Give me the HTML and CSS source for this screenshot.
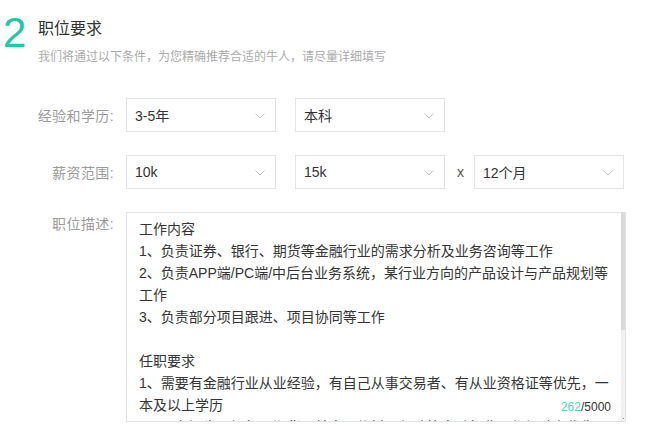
FILE: index.html
```html
<!DOCTYPE html>
<html lang="zh-CN">
<head>
<meta charset="utf-8">
<title>职位要求</title>
<link rel="stylesheet" href="styles.css">
</head>
<body>
<div class="page">
  <div class="step">
    <div class="num">2</div>
    <div class="head">
      <div class="title">职位要求</div>
      <div class="sub">我们将通过以下条件，为您精确推荐合适的牛人，请尽量详细填写</div>
    </div>
  </div>

  <div class="form">
    <div class="row">
      <div class="label">经验和学历:</div>
      <div class="sel"><span>3-5年</span><svg class="chev" width="10" height="6" viewBox="0 0 10 6"><path d="M0.5 0.5 L5 5 L9.5 0.5" fill="none" stroke="#c3c5cf" stroke-width="1"/></svg></div>
      <div class="sel gap"><span>本科</span><svg class="chev" width="10" height="6" viewBox="0 0 10 6"><path d="M0.5 0.5 L5 5 L9.5 0.5" fill="none" stroke="#c3c5cf" stroke-width="1"/></svg></div>
    </div>
    <div class="row">
      <div class="label">薪资范围:</div>
      <div class="sel"><span>10k</span><svg class="chev" width="10" height="6" viewBox="0 0 10 6"><path d="M0.5 0.5 L5 5 L9.5 0.5" fill="none" stroke="#c3c5cf" stroke-width="1"/></svg></div>
      <div class="sel gap"><span>15k</span><svg class="chev" width="10" height="6" viewBox="0 0 10 6"><path d="M0.5 0.5 L5 5 L9.5 0.5" fill="none" stroke="#c3c5cf" stroke-width="1"/></svg></div>
      <span class="times">x</span>
      <div class="sel"><span>12个月</span><svg class="chev" width="10" height="6" viewBox="0 0 10 6"><path d="M0.5 0.5 L5 5 L9.5 0.5" fill="none" stroke="#c3c5cf" stroke-width="1"/></svg></div>
    </div>
    <div class="row desc">
      <div class="label">职位描述:</div>
      <div class="ta">
        <div class="ta-text">
          <div class="ln">工作内容</div>
          <div class="ln">1、负责证券、银行、期货等金融行业的需求分析及业务咨询等工作</div>
          <div class="ln">2、负责APP端/PC端/中后台业务系统，某行业方向的产品设计与产品规划等</div>
          <div class="ln">工作</div>
          <div class="ln">3、负责部分项目跟进、项目协同等工作</div>
          <div class="ln">&nbsp;</div>
          <div class="ln">任职要求</div>
          <div class="ln">1、需要有金融行业从业经验，有自己从事交易者、有从业资格证等优先，一</div>
          <div class="ln">本及以上学历</div>
          <div class="ln">2、具有证券、银行、期货、基金、信托、保险等金融行业工作经验者优先</div>
        </div>
        <div class="count"><span class="cur">262</span>/5000</div>
        <div class="scroll"><div class="thumb"></div><div class="arrow"></div></div>
      </div>
    </div>
  </div>
</div>
</body>
</html>
```

FILE: styles.css
```css
html, body {
  margin: 0;
  padding: 0;
  background: #ffffff;
}

body {
  font-family: "Liberation Sans", "Noto Sans CJK SC", sans-serif;
  color: #333333;
}

.page {
  width: 650px;
  height: 433px;
  overflow: hidden;
}

.step {
  display: flex;
  align-items: flex-start;
}

.num {
  margin-top: 12px;
  margin-left: 3px;
  width: 35px;
  font-size: 42px;
  line-height: 42px;
  color: #21c7a7;
}

.head {
  margin-top: 18px;
}

.title {
  font-size: 16px;
  line-height: 22px;
  color: #333333;
}

.sub {
  margin-top: 8px;
  font-size: 12px;
  line-height: 18px;
  color: #ababab;
}

.form {
  margin-top: 32px;
  display: flex;
  flex-direction: column;
  gap: 23px;
}

.row {
  display: flex;
  align-items: center;
  height: 34px;
}

.label {
  box-sizing: border-box;
  width: 115px;
  margin-right: 11px;
  padding-right: 1px;
  text-align: right;
  font-size: 14px;
  letter-spacing: 0.4px;
  color: #9b9b9b;
  white-space: nowrap;
}

.sel {
  box-sizing: border-box;
  width: 150px;
  height: 34px;
  border: 1px solid #e2e2e9;
  padding: 0 10px 0 8px;
  display: flex;
  align-items: center;
  justify-content: space-between;
  font-size: 14px;
  color: #333333;
}

.sel.gap {
  margin-left: 19px;
}

.chev {
  display: block;
  margin-top: 1px;
}

.times {
  margin-left: 12px;
  margin-right: 10px;
  font-size: 14px;
  color: #555555;
}

.row.desc {
  height: auto;
  align-items: flex-start;
}

.row.desc .label {
  padding-top: 1px;
  line-height: 22px;
}

.ta {
  position: relative;
  box-sizing: border-box;
  width: 500px;
  height: 210px;
  border: 1px solid #e2e2e9;
  overflow: hidden;
}

.ta-text {
  padding: 5px 0 0 12px;
  font-size: 14px;
  line-height: 22px;
  color: #353535;
}

.ln {
  white-space: nowrap;
}

.count {
  position: absolute;
  right: 14px;
  bottom: 7px;
  font-size: 12px;
  line-height: 14px;
  color: #333333;
  background: #ffffff;
}

.count .cur {
  color: #5ccfb6;
}

.scroll {
  position: absolute;
  top: 0;
  right: -1px;
  bottom: 0;
  width: 5px;
  background: #f1f1f1;
}

.thumb {
  height: 117px;
  background: #d9d9d9;
}

.arrow {
  position: absolute;
  bottom: 2px;
  left: 2px;
  width: 1px;
  height: 1px;
  background: #8a8a8a;
}
```
